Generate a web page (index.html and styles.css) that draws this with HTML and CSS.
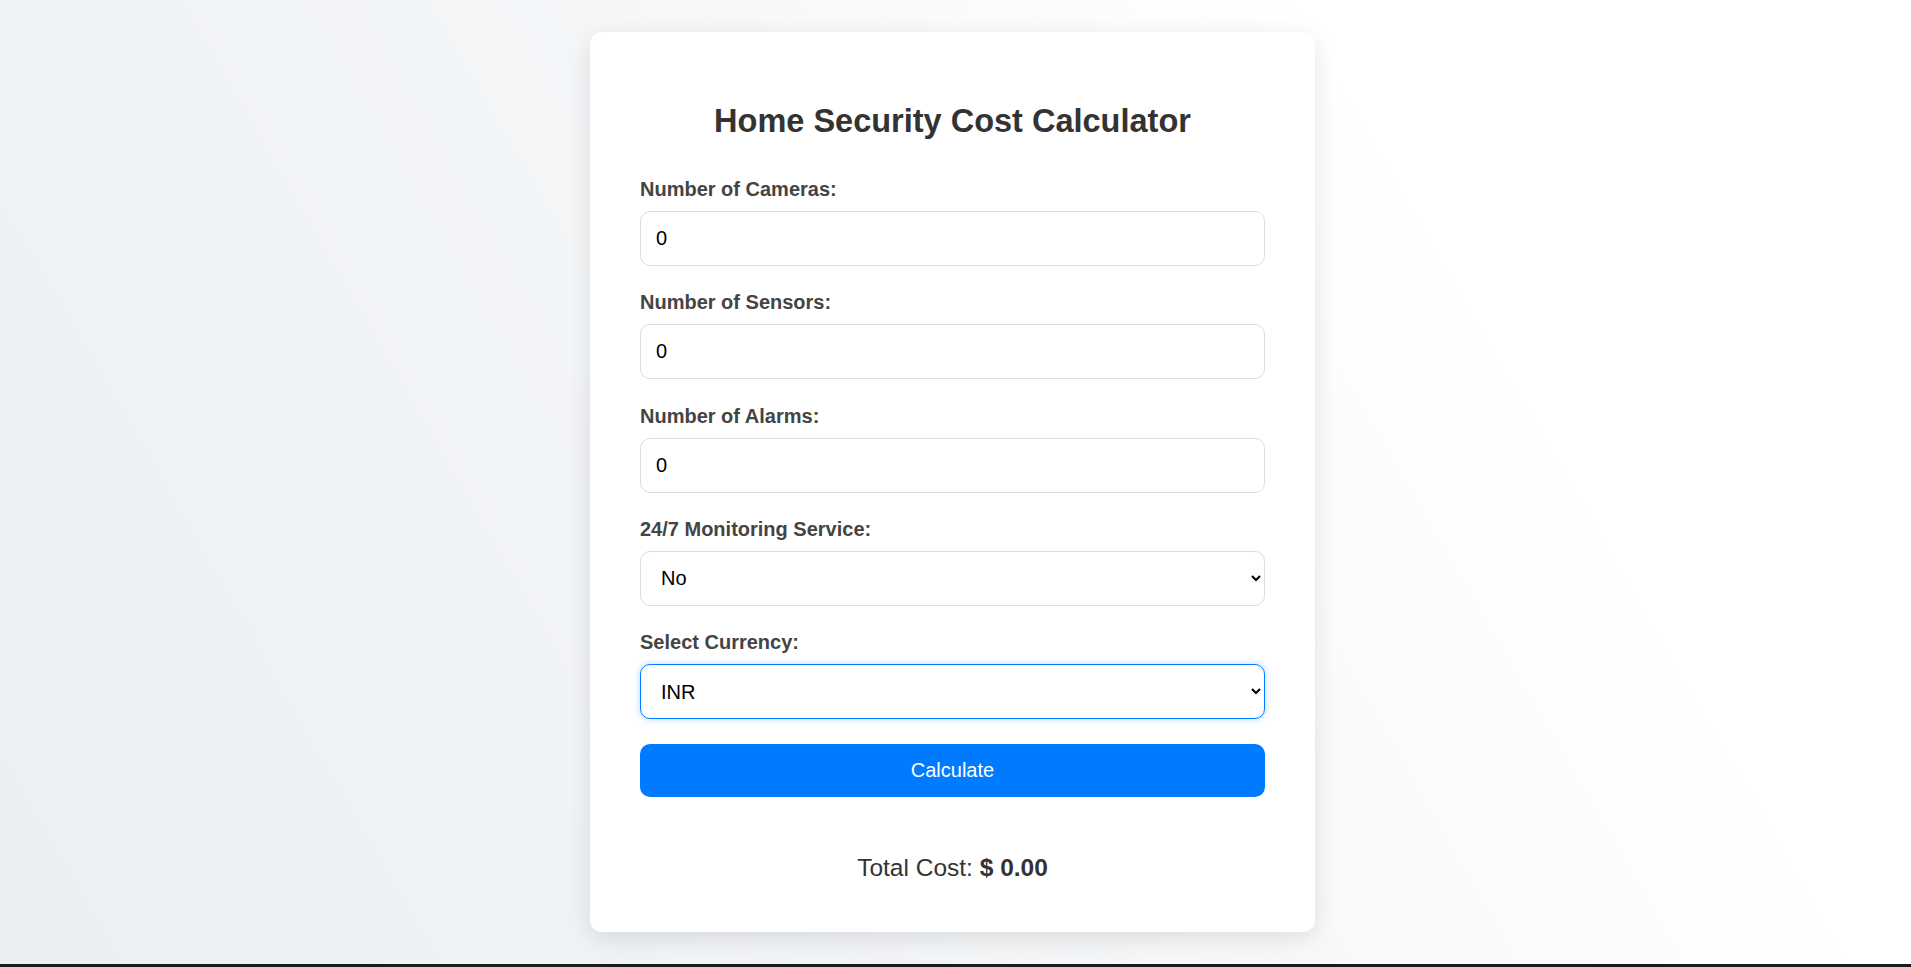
FILE: index.html
```html
<!DOCTYPE html>
<html lang="en">
<head>
<meta charset="utf-8">
<title>Home Security Cost Calculator</title>
<link rel="stylesheet" href="styles.css">
</head>
<body>
  <main class="card">
    <h2 class="title">Home Security Cost Calculator</h2>
    <div class="group">
      <label class="label" for="cameras">Number of Cameras:</label>
      <input class="field" id="cameras" type="number" value="0">
    </div>
    <div class="group">
      <label class="label" for="sensors">Number of Sensors:</label>
      <input class="field" id="sensors" type="number" value="0">
    </div>
    <div class="group">
      <label class="label" for="alarms">Number of Alarms:</label>
      <input class="field" id="alarms" type="number" value="0">
    </div>
    <div class="group">
      <label class="label" for="monitoring">24/7 Monitoring Service:</label>
      <select class="field select" id="monitoring">
        <option>No</option>
        <option>Yes</option>
      </select>
    </div>
    <div class="group">
      <label class="label" for="currency">Select Currency:</label>
      <select class="field select is-focused" id="currency">
        <option>INR</option>
        <option>USD</option>
        <option>EUR</option>
      </select>
    </div>
    <button class="btn" type="button">Calculate</button>
    <p class="result">Total Cost: <strong>$ 0.00</strong></p>
  </main>
</body>
</html>
```
FILE: styles.css
```css
html {
  background: #1b1b1b;
}
body {
  margin: 0;
  padding-right: 6px;
  height: 964px;
  display: flex;
  align-items: center;
  justify-content: center;
  font-family: "Liberation Sans", Arial, sans-serif;
  background: linear-gradient(60deg, #ebeff3 0%, #f4f6f8 45%, #ffffff 75%, #ffffff 100%);
}
.card {
  box-sizing: border-box;
  width: 725px;
  padding: 50px;
  background: #ffffff;
  border-radius: 12px;
  box-shadow: 0 6px 25px rgba(0, 0, 0, 0.11);
}
.title {
  margin: 21px 0 38px;
  font-size: 32.5px;
  font-weight: bold;
  line-height: normal;
  color: #333333;
  text-align: center;
}
.group {
  margin-bottom: 25.3px;
}
.label {
  display: block;
  margin-bottom: 10px;
  font-size: 20px;
  font-weight: bold;
  color: #444444;
}
.field {
  box-sizing: border-box;
  display: block;
  width: 100%;
  height: 55px;
  padding: 0 15px;
  font-family: "Liberation Sans", Arial, sans-serif;
  font-size: 20px;
  color: #000000;
  background: #ffffff;
  border: 1px solid #dddddd;
  border-radius: 10px;
  outline: none;
}
.field::-webkit-inner-spin-button,
.field::-webkit-outer-spin-button {
  -webkit-appearance: none;
  margin: 0;
}
.select {
  padding: 0 10px 0 16px;
}
.is-focused {
  border-color: #007bff;
  box-shadow: 0 0 7px rgba(0, 123, 255, 0.3);
}
.btn {
  display: block;
  width: 100%;
  height: 53px;
  padding: 0;
  font-family: "Liberation Sans", Arial, sans-serif;
  font-size: 20px;
  color: #ffffff;
  background: #007bff;
  border: none;
  border-radius: 10px;
}
.result {
  margin: 56.5px 0 0;
  font-size: 24.5px;
  line-height: normal;
  color: #333333;
  text-align: center;
}
.result strong {
  font-weight: bold;
}
```
